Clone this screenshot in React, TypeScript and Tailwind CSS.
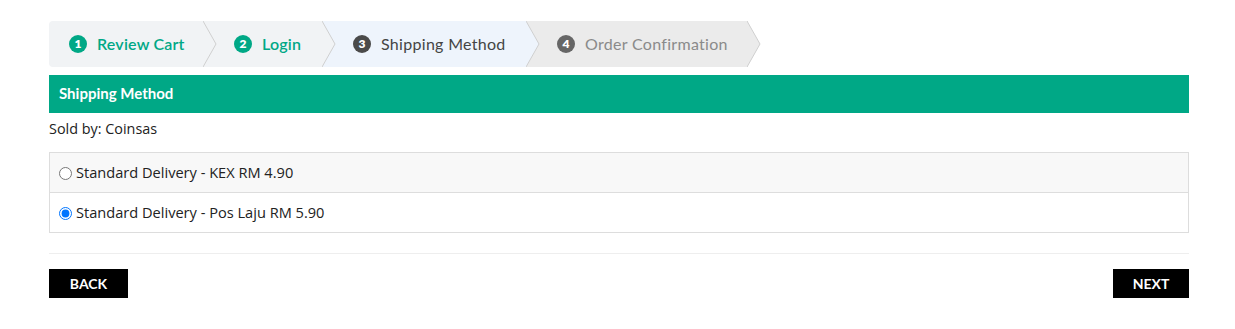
import { useState } from "react";

type Step = { n: number; label: string; state: "done" | "current" | "todo"; width: string };

const steps: Step[] = [
  { n: 1, label: "Review Cart", state: "done", width: "w-[155px]" },
  { n: 2, label: "Login", state: "done", width: "w-[119px]" },
  { n: 3, label: "Shipping Method", state: "current", width: "w-[204px]" },
  { n: 4, label: "Order Confirmation", state: "todo", width: "w-[221px]" },
];

const bgFor = { done: "#f1f3f5", current: "#eef4fc", todo: "#ebebeb" };

const StepItem = ({ step, first }: { step: Step; first: boolean }) => {
  const bg = bgFor[step.state];
  const circle =
    step.state === "done" ? "bg-[#00a886]" : step.state === "current" ? "bg-[#4a4a4a]" : "bg-[#666666]";
  const text =
    step.state === "done"
      ? "text-[#00a886] font-semibold tracking-[0.2px]"
      : step.state === "current"
        ? "text-[#444444] tracking-[0.3px]"
        : "text-[#8a8a8a] tracking-[0.3px]";
  return (
    <div
      className={`relative flex h-[46px] shrink-0 items-center ${step.width} ${first ? "pl-5 rounded-l-[4px]" : "pl-[30px]"}`}
      style={{ backgroundColor: bg, zIndex: 10 - step.n }}
    >
      <span
        className={`mr-[10px] flex h-[18px] w-[18px] items-center justify-center rounded-full text-[12px] font-extrabold text-white ${circle}`}
      >
        {step.n}
      </span>
      <span className={`text-[16px] leading-none whitespace-nowrap ${text}`}>{step.label}</span>
      <svg className="absolute top-0 right-[-13px]" width="14" height="46" viewBox="0 0 14 46">
        <polygon points="0,0 13,23 0,46" fill={bg} />
        <polyline points="0,0 13,23 0,46" fill="none" stroke="#cfcfcf" strokeWidth="1" />
      </svg>
    </div>
  );
};

export default function App() {
  const [method, setMethod] = useState("poslaju");
  const options = [
    { id: "kex", label: "Standard Delivery - KEX RM 4.90" },
    { id: "poslaju", label: "Standard Delivery - Pos Laju RM 5.90" },
  ];

  return (
    <div
      className="ml-[49px] w-[1140px] bg-white pt-[21px] text-[#222222]"
      style={{ fontFamily: "Lato, 'Open Sans', sans-serif" }}
    >
      <div className="flex">
        {steps.map((s, i) => (
          <StepItem key={s.n} step={s} first={i === 0} />
        ))}
      </div>

      <div className="mt-[8px] flex h-[38px] items-center bg-[#00a886] px-[10px] pb-[2px] text-[15px] font-bold text-white">
        Shipping Method
      </div>

      <div style={{ fontFamily: "'Open Sans', 'Noto Sans', sans-serif" }}>
        <p className="mt-[8px] text-[14.4px] leading-[16px]">Sold by: Coinsas</p>

        <div className="mt-[15px] border border-[#dddddd]">
          {options.map((o, i) => (
            <label
              key={o.id}
              className={`flex items-center px-[9px] pt-[1px] text-[14.6px] ${i === 0 ? "h-[40px] bg-[#f8f8f8] border-b border-[#dddddd]" : "h-[39px] bg-white"}`}
            >
              <input
                type="radio"
                name="ship"
                className="m-0 mr-[4px] h-[13px] w-[13px]"
                checked={method === o.id}
                onChange={() => setMethod(o.id)}
              />
              {o.label}
            </label>
          ))}
        </div>
      </div>

      <hr className="mt-[20px] border-t border-[#eeeeee]" />

      <div className="mt-[15px] flex justify-between">
        <button className="h-[29px] w-[79px] bg-black text-[14px] font-bold text-white">BACK</button>
        <button className="h-[29px] w-[76px] bg-black text-[14px] font-bold text-white">NEXT</button>
      </div>
    </div>
  );
}
